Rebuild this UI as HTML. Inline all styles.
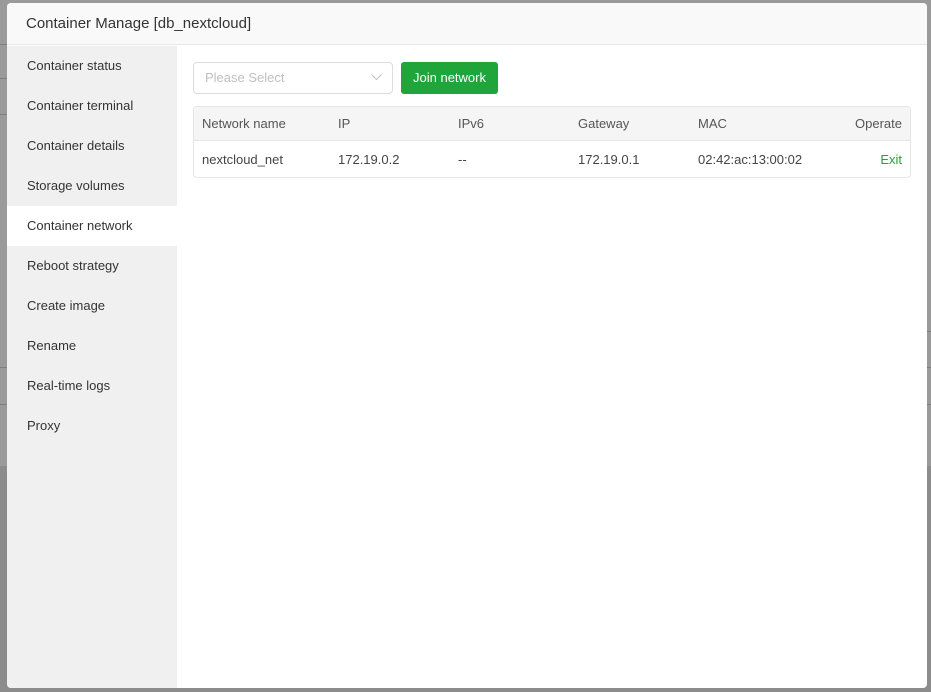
<!DOCTYPE html>
<html><head><meta charset="utf-8"><style>
*{box-sizing:border-box;margin:0;padding:0}
body{width:931px;height:692px;overflow:hidden;background:#8c8c8c;font-family:"Liberation Sans",sans-serif;font-size:13px;color:#333;position:relative}
.bgtop{position:absolute;left:0;top:0;width:931px;height:466px;background:#9a9a9a}
.ln{position:absolute;height:1px;background:#7f7f7f}
.dlg{position:absolute;left:7px;top:3px;width:920px;height:685px;background:#fff;border-radius:4px;overflow:hidden}
.hd{height:42px;background:#f9f9f9;border-bottom:1px solid #e6e6e6;padding-left:19px;line-height:42px;font-size:15px;color:#333}
.side{position:absolute;left:0;top:43px;width:170px;bottom:0;background:#f0f0f0}
.side div{height:40px;line-height:40px;padding-left:20px;font-size:13px;color:#333}
.side div.on{background:#fff}
.sel{position:absolute;left:186px;top:59px;width:200px;height:32px;border:1px solid #dcdcdc;border-radius:4px;color:#c0c0c0;padding-left:11px;line-height:30px}
.sel svg{position:absolute;right:10px;top:11px}
.btn{position:absolute;left:394px;top:59px;width:97px;height:32px;background:#20a53a;color:#fff;border-radius:3px;text-align:center;line-height:32px}
.tbl{position:absolute;left:186px;top:103px;width:718px;height:72px;border:1px solid #e6e6e6;border-radius:4px;overflow:hidden}
.row{position:relative;height:34px;line-height:34px;color:#444}
.row.d{line-height:37px}
.row.h{background:#f5f5f5;border-bottom:1px solid #e6e6e6;color:#555}
.row span{position:absolute}
</style></head><body>
<div class="bgtop"></div>
<div class="ln" style="left:0;top:44px;width:8px"></div>
<div class="ln" style="left:0;top:78px;width:8px"></div>
<div class="ln" style="left:0;top:114px;width:8px"></div>
<div class="ln" style="left:0;top:367px;width:8px"></div>
<div class="ln" style="left:0;top:404px;width:8px"></div>
<div class="ln" style="left:926px;top:331px;width:5px"></div>
<div class="ln" style="left:926px;top:367px;width:5px"></div>
<div class="ln" style="left:926px;top:404px;width:5px"></div>
<div class="dlg">
<div class="hd">Container Manage [db_nextcloud]</div>
<div class="side">
<div>Container status</div><div>Container terminal</div><div>Container details</div><div>Storage volumes</div><div class="on">Container network</div><div>Reboot strategy</div><div>Create image</div><div>Rename</div><div>Real-time logs</div><div>Proxy</div>
</div>
<div class="sel">Please Select<svg width="11" height="7" viewBox="0 0 11 7"><path d="M0.5 0.5L5.5 5.5L10.5 0.5" fill="none" stroke="#c0c0c0" stroke-width="1"/></svg></div>
<div class="btn">Join network</div>
<div class="tbl">
<div class="row h"><span style="left:8px">Network name</span><span style="left:144px">IP</span><span style="left:264px">IPv6</span><span style="left:384px">Gateway</span><span style="left:504px">MAC</span><span style="right:8px">Operate</span></div>
<div class="row d"><span style="left:8px">nextcloud_net</span><span style="left:144px">172.19.0.2</span><span style="left:264px">--</span><span style="left:384px">172.19.0.1</span><span style="left:504px">02:42:ac:13:00:02</span><span style="right:8px;color:#20a53a">Exit</span></div>
</div>
</div>
</body></html>
